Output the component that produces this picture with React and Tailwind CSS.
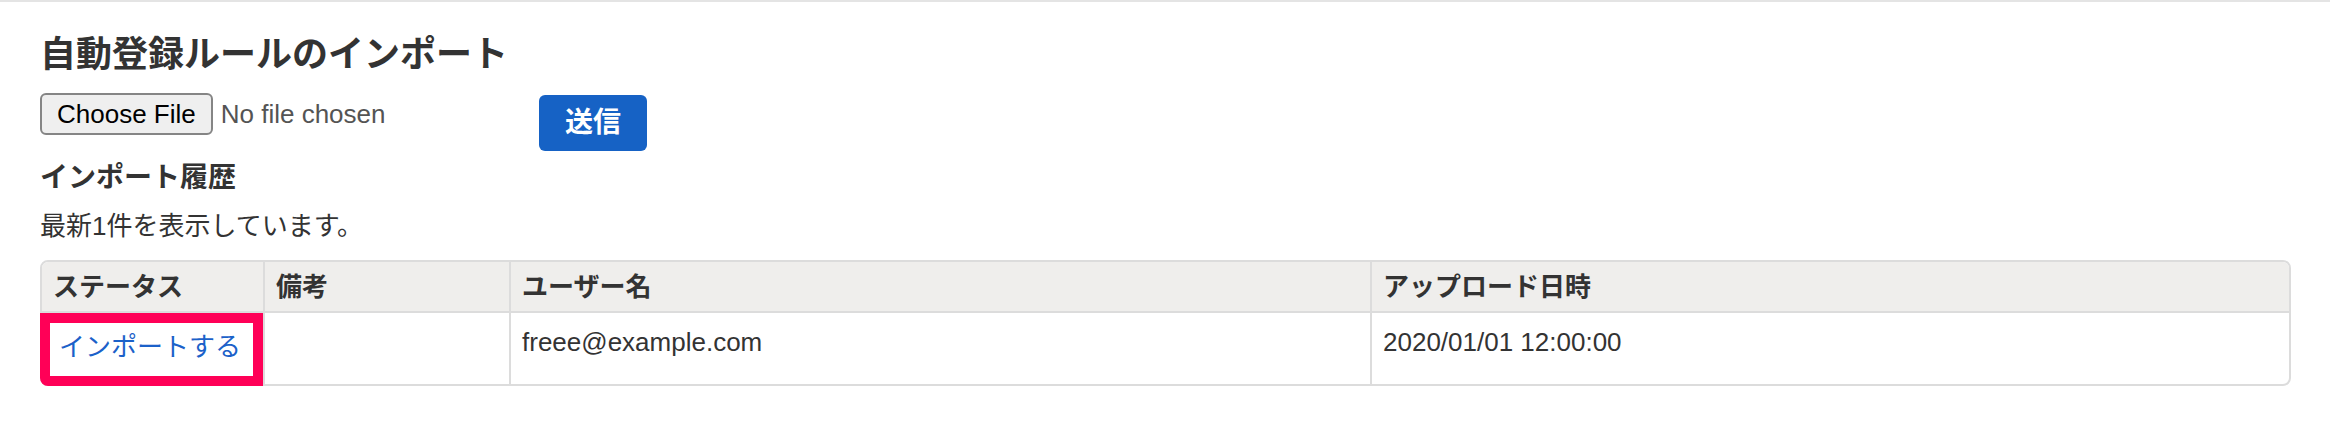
import React from 'react'

// Import screen for auto-registration rules, with the latest history row
const history = [
  { status: 'インポートする', note: '', user: 'freee@example.com', uploadedAt: '2020/01/01 12:00:00' },
];

const headers = ['ステータス', '備考', 'ユーザー名', 'アップロード日時'];

export default function App() {
  return (
    <div className="min-h-[426px] bg-white border-t-2 border-[#e4e4e4] text-[#333] font-['Liberation_Sans','Noto_Sans_CJK_JP',sans-serif]">
      <div className="pl-[40px] pt-[31px]">
        <h1 className="text-[36px] leading-[44px] font-bold">自動登録ルールのインポート</h1>

        {/* file picker + submit */}
        <div className="mt-[16px] flex items-start">
          <div className="w-[499px] flex items-center gap-[8px]">
            <button
              type="button"
              className="h-[42px] px-[15px] border-2 border-[#858585] rounded-[6px] bg-[#efefef] text-black text-[26px] leading-[38px]"
            >
              Choose File
            </button>
            <span className="text-[26px] leading-[38px] text-[#545454]">No file chosen</span>
          </div>
          <button
            type="button"
            className="mt-[2px] w-[108px] h-[56px] rounded-[6px] bg-[#1662c5] text-white font-bold text-[28px] leading-none flex items-center justify-center"
          >
            送信
          </button>
        </div>

        <h2 className="mt-[9px] text-[28px] leading-[36px] font-bold">インポート履歴</h2>
        <p className="mt-[14px] text-[26px] leading-[32px]">最新1件を表示しています。</p>

        {/* history table */}
        <div className="mt-[18px] w-[2251px] border-2 border-[#dcdcdc] rounded-[8px]">
          <div className="grid grid-cols-[223px_246px_861px_917px] text-[26px]">
            {headers.map((h, i) => (
              <div
                key={h}
                className={
                  'h-[51px] px-[11px] pt-[2px] flex items-center font-bold bg-[#efeeec] border-b-2 border-[#dcdcdc] ' +
                  (i === 0 ? 'rounded-tl-[6px] border-r-2' : i === headers.length - 1 ? 'rounded-tr-[6px]' : 'border-r-2')
                }
              >
                {h}
              </div>
            ))}
            {history.map((row) => (
              <React.Fragment key={row.uploadedAt}>
                <div className="relative h-[71px] pl-[17px] pr-[11px] pt-[19px] leading-[30px] border-r-2 border-[#dcdcdc]">
                  <a href="#" className="text-[#1b61c9]">{row.status}</a>
                  {/* highlight annotation */}
                  <div className="absolute -left-[2px] top-0 right-0 -bottom-[2px] border-[10px] border-[#ff0057] rounded-bl-[8px] pointer-events-none" />
                </div>
                <div className="h-[71px] px-[11px] pt-[14px] leading-[30px] border-r-2 border-[#dcdcdc]">{row.note}</div>
                <div className="h-[71px] px-[11px] pt-[14px] leading-[30px] border-r-2 border-[#dcdcdc]">{row.user}</div>
                <div className="h-[71px] px-[11px] pt-[14px] leading-[30px]">{row.uploadedAt}</div>
              </React.Fragment>
            ))}
          </div>
        </div>
      </div>
    </div>
  );
}
